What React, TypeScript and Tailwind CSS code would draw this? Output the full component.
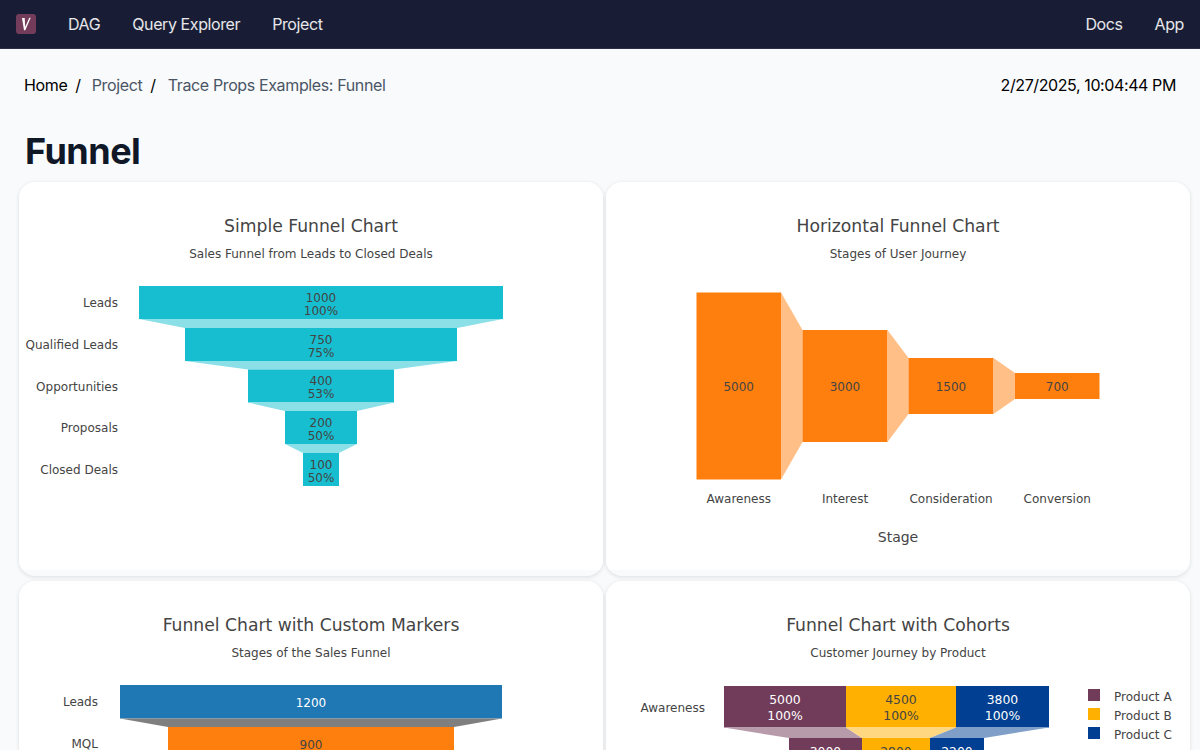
const chartFont = { fontFamily: '"DejaVu Sans", sans-serif' };

type Bar = { x0: number; x1: number; y0: number; y1: number; fill: string; link?: string; lines?: string[]; text?: string };

function Shape({ bar, next }: { bar: Bar; next?: Bar }) {
  return (
    <>
      <rect x={bar.x0} y={bar.y0} width={bar.x1 - bar.x0} height={bar.y1 - bar.y0} fill={bar.fill} />
      {next && bar.link && (
        <polygon
          points={`${bar.x0},${bar.y1} ${bar.x1},${bar.y1} ${next.x1},${next.y0} ${next.x0},${next.y0}`}
          fill={bar.link}
        />
      )}
    </>
  );
}

function Titles({ cx, y, title, sub }: { cx: number; y: number; title: string; sub: string }) {
  return (
    <>
      <text x={cx} y={y} textAnchor="middle" fontSize="17.2" fill="#444">{title}</text>
      <text x={cx} y={y + 26} textAnchor="middle" fontSize="12" fill="#444">{sub}</text>
    </>
  );
}

const simple: (Bar & { label: string })[] = [
  { label: "Leads", x0: 139, x1: 503, y0: 286, y1: 319, lines: ["1000", "100%"], fill: "#17becf", link: "#8bdfe7" },
  { label: "Qualified Leads", x0: 185, x1: 457, y0: 328, y1: 361, lines: ["750", "75%"], fill: "#17becf", link: "#8bdfe7" },
  { label: "Opportunities", x0: 248, x1: 394, y0: 369.5, y1: 402.5, lines: ["400", "53%"], fill: "#17becf", link: "#8bdfe7" },
  { label: "Proposals", x0: 285, x1: 357, y0: 411, y1: 444, lines: ["200", "50%"], fill: "#17becf", link: "#8bdfe7" },
  { label: "Closed Deals", x0: 303, x1: 339, y0: 453, y1: 486, lines: ["100", "50%"], fill: "#17becf" },
];

const horizontal = [
  { label: "Awareness", value: "5000", x0: 696.5, x1: 781, y0: 292.5, y1: 479.5 },
  { label: "Interest", value: "3000", x0: 802.5, x1: 887.5, y0: 330, y1: 442 },
  { label: "Consideration", value: "1500", x0: 908.5, x1: 993.5, y0: 358, y1: 414 },
  { label: "Conversion", value: "700", x0: 1015, x1: 1099.5, y0: 373, y1: 399 },
];

const cohorts = [
  { name: "Product A", fill: "#713c5a", link: "#b89bab", dark: false, top: { x0: 724, x1: 846, v: "5000" }, bottom: { x0: 789, x1: 862, v: "3000" } },
  { name: "Product B", fill: "#ffb000", link: "#ffd780", dark: true, top: { x0: 846, x1: 956, v: "4500" }, bottom: { x0: 862, x1: 930, v: "2800" } },
  { name: "Product C", fill: "#003f91", link: "#7f9fc8", dark: false, top: { x0: 956, x1: 1049, v: "3800" }, bottom: { x0: 930, x1: 984, v: "2200" } },
];

function SimpleFunnel() {
  return (
    <svg viewBox="19 182 584 388" className="block h-[388px] w-full bg-white" style={chartFont}>
      <Titles cx={311} y={232} title="Simple Funnel Chart" sub="Sales Funnel from Leads to Closed Deals" />
      {simple.map((b, i) => (
        <g key={b.label}>
          <Shape bar={b} next={simple[i + 1]} />
          <text x={118} y={(b.y0 + b.y1) / 2 + 4.5} textAnchor="end" fontSize="12" fill="#444">{b.label}</text>
          <text x={321} y={Math.floor(b.y0) + 15.5} textAnchor="middle" fontSize="12" fill="#444">{b.lines?.[0]}</text>
          <text x={321} y={Math.floor(b.y0) + 29} textAnchor="middle" fontSize="12" fill="#444">{b.lines?.[1]}</text>
        </g>
      ))}
    </svg>
  );
}

function HorizontalFunnel() {
  return (
    <svg viewBox="606 182 584 388" className="block h-[388px] w-full bg-white" style={chartFont}>
      <Titles cx={898} y={232} title="Horizontal Funnel Chart" sub="Stages of User Journey" />
      {horizontal.map((b, i) => {
        const next = horizontal[i + 1];
        const cx = (b.x0 + b.x1) / 2;
        return (
          <g key={b.label}>
            <rect x={b.x0} y={b.y0} width={b.x1 - b.x0} height={b.y1 - b.y0} fill="#ff7f0e" />
            {next && (
              <polygon
                points={`${b.x1},${b.y0} ${next.x0},${next.y0} ${next.x0},${next.y1} ${b.x1},${b.y1}`}
                fill="#ffbf86"
              />
            )}
            <text x={cx} y={391} textAnchor="middle" fontSize="12" fill="#444">{b.value}</text>
            <text x={cx} y={503} textAnchor="middle" fontSize="12" fill="#444">{b.label}</text>
          </g>
        );
      })}
      <text x={898} y={542} textAnchor="middle" fontSize="14" fill="#444">Stage</text>
    </svg>
  );
}

function MarkersFunnel() {
  return (
    <svg viewBox="19 581 584 388" className="block h-[388px] w-full bg-white" style={chartFont}>
      <Titles cx={311} y={631} title="Funnel Chart with Custom Markers" sub="Stages of the Sales Funnel" />
      <rect x={120} y={685} width={382} height={33.5} fill="#1f77b4" />
      <polygon points="120,718.5 502,718.5 454,727 168,727" fill="#7f7f7f" />
      <rect x={168} y={727} width={286} height={33} fill="#ff7f0e" />
      <text x={98} y={706} textAnchor="end" fontSize="12" fill="#444">Leads</text>
      <text x={98} y={748} textAnchor="end" fontSize="12" fill="#444">MQL</text>
      <text x={311} y={707} textAnchor="middle" fontSize="12" fill="#fff">1200</text>
      <text x={311} y={749} textAnchor="middle" fontSize="12" fill="#444">900</text>
    </svg>
  );
}

function CohortFunnel() {
  return (
    <svg viewBox="606 581 584 388" className="block h-[388px] w-full bg-white" style={chartFont}>
      <Titles cx={898} y={631} title="Funnel Chart with Cohorts" sub="Customer Journey by Product" />
      <text x={705} y={712} textAnchor="end" fontSize="12" fill="#444">Awareness</text>
      {cohorts.map((c, i) => {
        const color = c.dark ? "#444" : "#fff";
        const cx = (c.top.x0 + c.top.x1) / 2;
        const nx = (c.bottom.x0 + c.bottom.x1) / 2;
        return (
          <g key={c.name}>
            <rect x={c.top.x0} y={686} width={c.top.x1 - c.top.x0} height={41.5} fill={c.fill} />
            <polygon
              points={`${c.top.x0},727.5 ${c.top.x1},727.5 ${c.bottom.x1},738 ${c.bottom.x0},738`}
              fill={c.link}
            />
            <rect x={c.bottom.x0} y={738} width={c.bottom.x1 - c.bottom.x0} height={42} fill={c.fill} />
            <text x={cx} y={704} textAnchor="middle" fontSize="12.4" fill={color}>{c.top.v}</text>
            <text x={cx} y={719.5} textAnchor="middle" fontSize="12.4" fill={color}>100%</text>
            <text x={nx} y={756} textAnchor="middle" fontSize="12.4" fill={color}>{c.bottom.v}</text>
            <rect x={1088} y={689 + i * 19} width={12} height={12} fill={c.fill} />
            <text x={1114} y={701 + i * 19} fontSize="12" fill="#444">{c.name}</text>
          </g>
        );
      })}
    </svg>
  );
}

function Card({ children }: { children: React.ReactNode }) {
  return (
    <div className="h-[394px] overflow-hidden rounded-2xl bg-gray-50 shadow-[0_1px_4px_rgba(0,0,0,0.12)]">
      {children}
    </div>
  );
}

export default function App() {
  return (
    <div className="h-screen overflow-hidden bg-[#f9fafc] font-['Inter',sans-serif]">
      <header className="flex h-[49px] items-center justify-between border-b border-[#2b3046] bg-[#181d35] pl-4 pr-0 tracking-[-0.4px] text-white/90">
        <div className="flex items-center">
          <svg viewBox="0 0 20 20" className="mr-4 h-5 w-5">
            <rect width="20" height="20" rx="3" fill="#733c5a" />
            <path d="M6 4 L8.7 4 L9.2 13 L13.3 3.8 L14.7 3.8 L9.3 16.2 L8 16.2 Z" fill="#fff" />
          </svg>
          <a className="px-4">DAG</a>
          <a className="px-4">Query Explorer</a>
          <a className="px-4">Project</a>
        </div>
        <div className="flex items-center">
          <a className="px-4">Docs</a>
          <a className="px-4">App</a>
        </div>
      </header>

      <main>
        <div className="flex items-center justify-between px-6 pt-6 tracking-[-0.37px]">
          <div className="flex items-center text-base text-black">
            <span>Home</span>
            <span className="ml-2 mr-[11px]">/</span>
            <span className="text-gray-600">Project</span>
            <span className="ml-2 mr-3">/</span>
            <span className="text-gray-600">Trace Props Examples: Funnel</span>
          </div>
          <div className="text-base tracking-[-0.4px] text-black">2/27/2025, 10:04:44 PM</div>
        </div>

        <h1 className="mt-[34px] pl-[25px] text-4xl font-bold tracking-[-0.5px] text-gray-900">Funnel</h1>

        <div className="mt-[11px] grid grid-cols-2 gap-x-[3px] gap-y-[5px] pl-[19px] pr-[10px]">
          <Card><SimpleFunnel /></Card>
          <Card><HorizontalFunnel /></Card>
          <Card><MarkersFunnel /></Card>
          <Card><CohortFunnel /></Card>
        </div>
      </main>
    </div>
  );
}
